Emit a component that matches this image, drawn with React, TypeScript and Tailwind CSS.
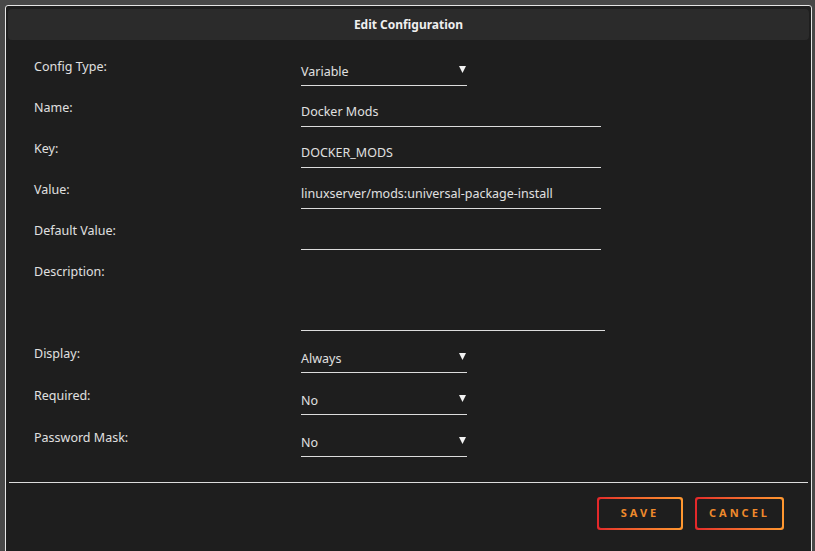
import React from "react";

type Row = {
  label: string;
  kind: "select" | "text" | "area";
  value?: string;
  tall?: boolean;
};

const rows: Row[] = [
  { label: "Config Type:", kind: "select", value: "Variable" },
  { label: "Name:", kind: "text", value: "Docker Mods" },
  { label: "Key:", kind: "text", value: "DOCKER_MODS" },
  { label: "Value:", kind: "text", value: "linuxserver/mods:universal-package-install" },
  { label: "Default Value:", kind: "text", value: "" },
  { label: "Description:", kind: "area", value: "" },
  { label: "Display:", kind: "select", value: "Always", tall: true },
  { label: "Required:", kind: "select", value: "No", tall: true },
  { label: "Password Mask:", kind: "select", value: "No", tall: true },
];

const Caret = () => (
  <svg width="7" height="7" viewBox="0 0 7 7" className="mr-[1px] mt-[5px]">
    <polygon points="0,0 7,0 3.5,7" fill="#f2f2f2" />
  </svg>
);

const Field = ({ row }: { row: Row }) => {
  if (row.kind === "select") {
    return (
      <div className="mt-[5px] flex h-[25px] w-[166px] items-start justify-between border-b border-[#dcdcdc]">
        <span className="pt-[1px] leading-[20px]">{row.value}</span>
        <Caret />
      </div>
    );
  }
  if (row.kind === "area") {
    return <div className="mt-[5px] h-[65px] w-[304px] border-b border-[#dcdcdc]" />;
  }
  return (
    <div className="mt-[5px] h-[25px] w-[300px] border-b border-[#dcdcdc]">
      <span className="leading-[20px]">{row.value}</span>
    </div>
  );
};

const GradientButton = ({ label, width }: { label: string; width: string }) => (
  <div className={`rounded-[3px] bg-gradient-to-r from-[#e3262a] to-[#ff9830] p-[2px] ${width}`}>
    <div className="flex h-[29px] items-center justify-center rounded-[2px] bg-[#1e1e1e] text-[11px] font-bold tracking-[3px] text-[#f08a2c]">
      {label}
    </div>
  </div>
);

export default function App() {
  return (
    <div
      className="h-[551px] w-[815px] overflow-hidden bg-[#484848] pl-[5px] pt-[5px]"
      style={{ fontFamily: '"Noto Sans", "Open Sans", sans-serif' }}
    >
      <div className="h-[560px] w-[807px] rounded-[3px] border border-[#e6e6e6] bg-[#1e1e1e] text-[#e0e0e0]">
        <div className="mx-[2px] mt-[3px] flex h-[31px] items-center justify-center rounded-[4px] bg-[#2b2b2b] text-[12px] font-bold text-[#efefef]">
          Edit Configuration
        </div>

        <div className="pl-[28px] pt-[16px] text-[12.5px]">
          {rows.map((row) => (
            <div
              key={row.label}
              className={`flex ${
                row.kind === "area" ? "h-[82px]" : row.tall ? "h-[42px]" : "h-[41px]"
              }`}
            >
              <div className="w-[267px] pt-[1px] leading-[20px]">{row.label}</div>
              <Field row={row} />
            </div>
          ))}
        </div>

        <div className="mx-[3px] mt-[13px] border-t border-[#dcdcdc]" />

        <div className="flex justify-end gap-[12px] pr-[27px] pt-[14px]">
          <GradientButton label="SAVE" width="w-[86px]" />
          <GradientButton label="CANCEL" width="w-[89px]" />
        </div>
      </div>
    </div>
  );
}
